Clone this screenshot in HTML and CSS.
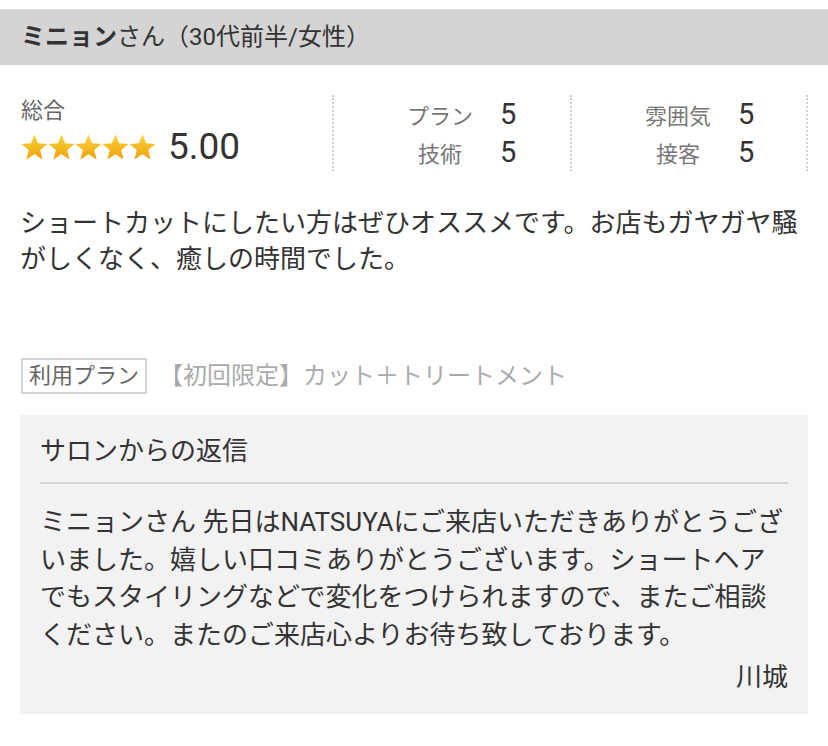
FILE: index.html
```html
<!DOCTYPE html>
<html lang="ja">
<head>
<meta charset="utf-8">
<title>口コミ</title>
<link rel="stylesheet" href="styles.css">
</head>
<body>
<div class="review">
  <div class="review-head"><b class="name">ミニョン</b>さん（30代前半/女性）</div>

  <div class="ratings">
    <div class="total">
      <div class="total-label">総合</div>
      <div class="total-score">
        <span class="stars">
          <svg class="star" viewBox="0 0 24 24"><defs><linearGradient id="g" x1="0" y1="0" x2="0" y2="1"><stop offset="0" stop-color="#fbd33a"/><stop offset="1" stop-color="#eda20f"/></linearGradient></defs><polygon fill="url(#g)" points="12,0.5 15.2,8.3 23.6,8.9 17.1,14.2 19.2,22.6 12,18.1 4.8,22.6 6.9,14.2 0.4,8.9 8.8,8.3"/></svg>
          <svg class="star" viewBox="0 0 24 24"><polygon fill="url(#g)" points="12,0.5 15.2,8.3 23.6,8.9 17.1,14.2 19.2,22.6 12,18.1 4.8,22.6 6.9,14.2 0.4,8.9 8.8,8.3"/></svg>
          <svg class="star" viewBox="0 0 24 24"><polygon fill="url(#g)" points="12,0.5 15.2,8.3 23.6,8.9 17.1,14.2 19.2,22.6 12,18.1 4.8,22.6 6.9,14.2 0.4,8.9 8.8,8.3"/></svg>
          <svg class="star" viewBox="0 0 24 24"><polygon fill="url(#g)" points="12,0.5 15.2,8.3 23.6,8.9 17.1,14.2 19.2,22.6 12,18.1 4.8,22.6 6.9,14.2 0.4,8.9 8.8,8.3"/></svg>
          <svg class="star" viewBox="0 0 24 24"><polygon fill="url(#g)" points="12,0.5 15.2,8.3 23.6,8.9 17.1,14.2 19.2,22.6 12,18.1 4.8,22.6 6.9,14.2 0.4,8.9 8.8,8.3"/></svg>
        </span>
        <span class="score">5.00</span>
      </div>
    </div>
    <div class="rating-col">
      <div class="rating-row"><span class="r-label">プラン</span><span class="r-val">5</span></div>
      <div class="rating-row"><span class="r-label">技術</span><span class="r-val">5</span></div>
    </div>
    <div class="rating-col">
      <div class="rating-row"><span class="r-label">雰囲気</span><span class="r-val">5</span></div>
      <div class="rating-row"><span class="r-label">接客</span><span class="r-val">5</span></div>
    </div>
  </div>

  <p class="review-body">ショートカットにしたい方はぜひオススメです。お店もガヤガヤ騒がしくなく、癒しの時間でした。</p>

  <div class="plan">
    <span class="plan-badge">利用プラン</span>
    <span class="plan-name">【初回限定】カット＋トリートメント</span>
  </div>

  <div class="reply">
    <div class="reply-title">サロンからの返信</div>
    <p class="reply-body">ミニョンさん 先日はNATSUYAにご来店いただきありがとうございました。嬉しい口コミありがとうございます。ショートヘアでもスタイリングなどで変化をつけられますので、またご相談ください。またのご来店心よりお待ち致しております。</p>
    <p class="reply-sign">川城</p>
  </div>
</div>
</body>
</html>
```

FILE: styles.css
```css
* { box-sizing: border-box; }

html, body {
  margin: 0;
  padding: 0;
  background: #fff;
}

body {
  font-family: Roboto, "Noto Sans CJK JP", sans-serif;
  color: #333;
  padding-top: 9px;
}

.review-head {
  height: 56px;
  background: #d4d4d4;
  padding-left: 21px;
  font-size: 24px;
  line-height: 56px;
  color: #333;
}

.name {
  font-weight: 700;
}

.ratings {
  display: grid;
  grid-template-columns: 314px 238px 236px;
  margin: 30px 20px 0;
}

.total {
  border-right: 2px dotted #cfcfcf;
}

.total-label {
  font-size: 22px;
  line-height: 32px;
  color: #666;
  padding-left: 1px;
}

.total-score {
  display: flex;
  align-items: center;
  height: 40px;
}

.stars {
  display: flex;
  margin-left: 1px;
}

.star {
  width: 27px;
  height: 27px;
  display: block;
}

.score {
  font-size: 37px;
  line-height: 40px;
  margin-left: 12px;
  color: #333;
}

.rating-col {
  border-right: 2px dotted #cfcfcf;
}

.rating-row {
  display: flex;
  align-items: center;
  height: 38px;
  padding-left: 54px;
}

.r-label {
  width: 104px;
  text-align: center;
  font-size: 22px;
  color: #777;
}

.r-val {
  margin-left: 8px;
  font-size: 29px;
  color: #333;
}

.review-body {
  margin: 34px 20px 0;
  font-size: 26px;
  line-height: 36px;
  color: #333;
}

.plan {
  display: flex;
  align-items: center;
  margin: 81px 20px 0 21px;
}

.plan-badge {
  border: 2px solid #d3d3d3;
  height: 36px;
  padding: 0 6px;
  font-size: 22px;
  line-height: 32px;
  color: #666;
}

.plan-name {
  margin-left: 12px;
  font-size: 24px;
  line-height: 32px;
  color: #aaa;
}

.reply {
  margin: 21px 20px 0;
  background: #f2f2f2;
  padding: 18px 20px 18px;
}

.reply-title {
  font-size: 26px;
  line-height: 37px;
  padding-bottom: 12px;
  border-bottom: 2px solid #d5d5d5;
  color: #333;
}

.reply-body {
  margin: 20px 0 0;
  font-size: 26px;
  line-height: 37.5px;
  color: #333;
}

.reply-sign {
  margin: 4px 0 0;
  text-align: right;
  font-size: 26px;
  line-height: 38px;
  color: #333;
}
```
